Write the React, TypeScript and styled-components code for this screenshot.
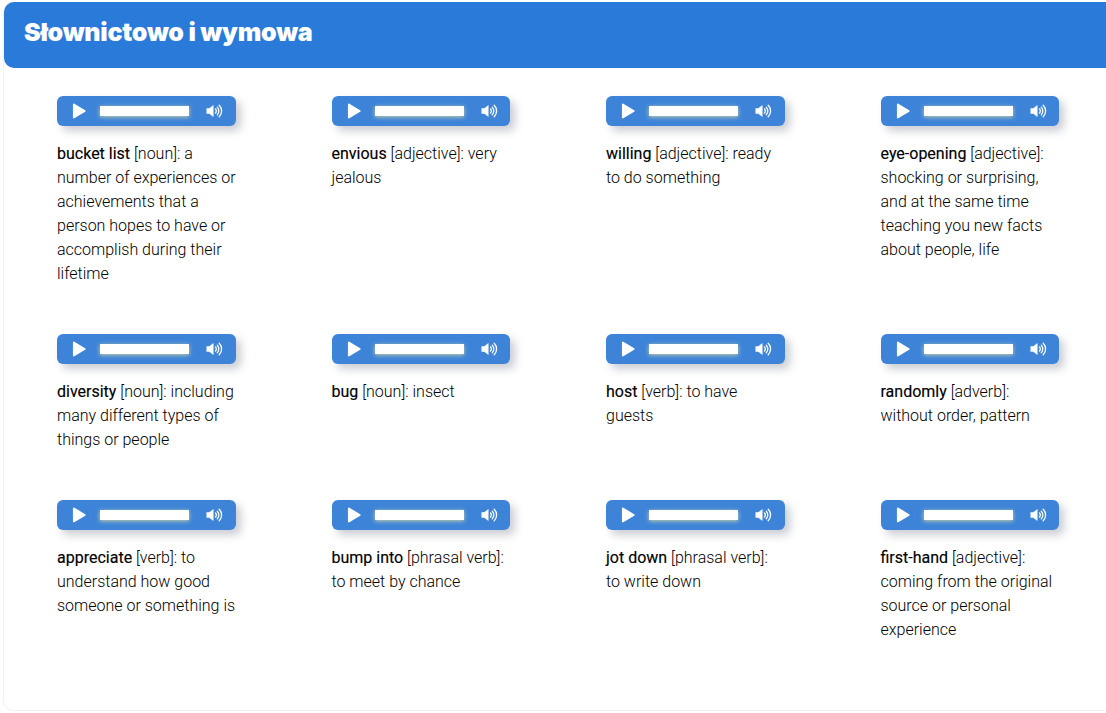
import React from 'react';
import styled, { createGlobalStyle } from 'styled-components';

interface Word {
    term: string;
    kind: string;
    meaning: string;
}

const words: Word[] = [
    { term: 'bucket list', kind: 'noun', meaning: 'a number of experiences or achievements that a person hopes to have or accomplish during their lifetime' },
    { term: 'envious', kind: 'adjective', meaning: 'very jealous' },
    { term: 'willing', kind: 'adjective', meaning: 'ready to do something' },
    { term: 'eye-opening', kind: 'adjective', meaning: 'shocking or surprising, and at the same time teaching you new facts about people, life' },
    { term: 'diversity', kind: 'noun', meaning: 'including many different types of things or people' },
    { term: 'bug', kind: 'noun', meaning: 'insect' },
    { term: 'host', kind: 'verb', meaning: 'to have guests' },
    { term: 'randomly', kind: 'adverb', meaning: 'without order, pattern' },
    { term: 'appreciate', kind: 'verb', meaning: 'to understand how good someone or something is' },
    { term: 'bump into', kind: 'phrasal verb', meaning: 'to meet by chance' },
    { term: 'jot down', kind: 'phrasal verb', meaning: 'to write down' },
    { term: 'first-hand', kind: 'adjective', meaning: 'coming from the original source or personal experience' },
];

function AudioPlayer() {
    return (
        <Player>
            <svg width="14" height="16" viewBox="0 0 15 17">
                <path d="M1 1.500C1 .6 1.800.2 2.500.6l11.600 7c.7.4.7 1.400 0 1.800l-11.600 7c-.7.4-1.500 0-1.500-.9z" fill="#fff" />
            </svg>
            <Track />
            <svg width="18" height="16" viewBox="0 0 18 16" fill="none">
                <path d="M0.500 5.300h2.800L7.500 2v12L3.300 10.700H.500z" fill="#fff" />
                <path d="M9.500 6a2.800 2.800 0 0 1 0 4M11.300 4.300a5.300 5.300 0 0 1 0 7.400M13.200 2.300a8 8 0 0 1 0 11.400" stroke="#fff" strokeWidth="1.300" strokeLinecap="round" />
            </svg>
        </Player>
    );
}

export default function App() {
    return (
        <>
            <GlobalStyle />
            <Card>
                <Header>
                    <Title>Słownictowo i wymowa</Title>
                </Header>
                <Grid>
                    {words.map(word => (
                        <Item key={word.term}>
                            <AudioPlayer />
                            <Definition>
                                <strong>{word.term}</strong> [{word.kind}]: {word.meaning}
                            </Definition>
                        </Item>
                    ))}
                </Grid>
            </Card>
        </>
    );
}

const GlobalStyle = createGlobalStyle`
    html, body {
        margin: 0;
        background: #ffffff;
        overflow: hidden;
    }
`;

const Card = styled.div`
    box-sizing: border-box;
    width: 1120px;
    height: 709px;
    margin: 2px 0 0 3px;
    border: 1px solid #f1f1f1;
    border-radius: 10px;
`;

const Header = styled.div`
    box-sizing: border-box;
    height: 66px;
    margin-top: -1px;
    padding: 12px 20px;
    background: #2a7ada;
    border-radius: 10px 10px 0 10px;
`;

const Title = styled.h1`
    margin: 0;
    font-family: Inter, sans-serif;
    font-size: 25px;
    line-height: 36px;
    font-weight: 900;
    letter-spacing: -0.25px;
    color: #ffffff;
`;

const Grid = styled.div`
    display: grid;
    grid-template-columns: repeat(4, 179.250px);
    column-gap: 95.250px;
    row-gap: 48px;
    padding: 28px 0 0 53px;
`;

const Item = styled.div`
    display: flex;
    flex-direction: column;
`;

const Player = styled.div`
    box-sizing: border-box;
    display: flex;
    align-items: center;
    justify-content: space-between;
    width: 178.500px;
    height: 30px;
    padding: 0 11.500px 0 15px;
    background: #3d84d9;
    border-radius: 6px;
    box-shadow: 5px 5px 8px rgba(80, 90, 110, 0.3);
`;

const Track = styled.div`
    width: 89px;
    height: 10px;
    margin: 0 auto 1px 14px;
    background: #ffffff;
    box-shadow: 0 1px 4px rgba(205, 210, 165, 1);
`;

const Definition = styled.p`
    margin: 16px 0 0;
    font-family: Roboto, sans-serif;
    font-size: 16px;
    line-height: 24px;
    font-weight: 300;
    color: #000000;

    strong {
        font-weight: 400;
        -webkit-text-stroke: 0.15px #000000;
    }
`;
